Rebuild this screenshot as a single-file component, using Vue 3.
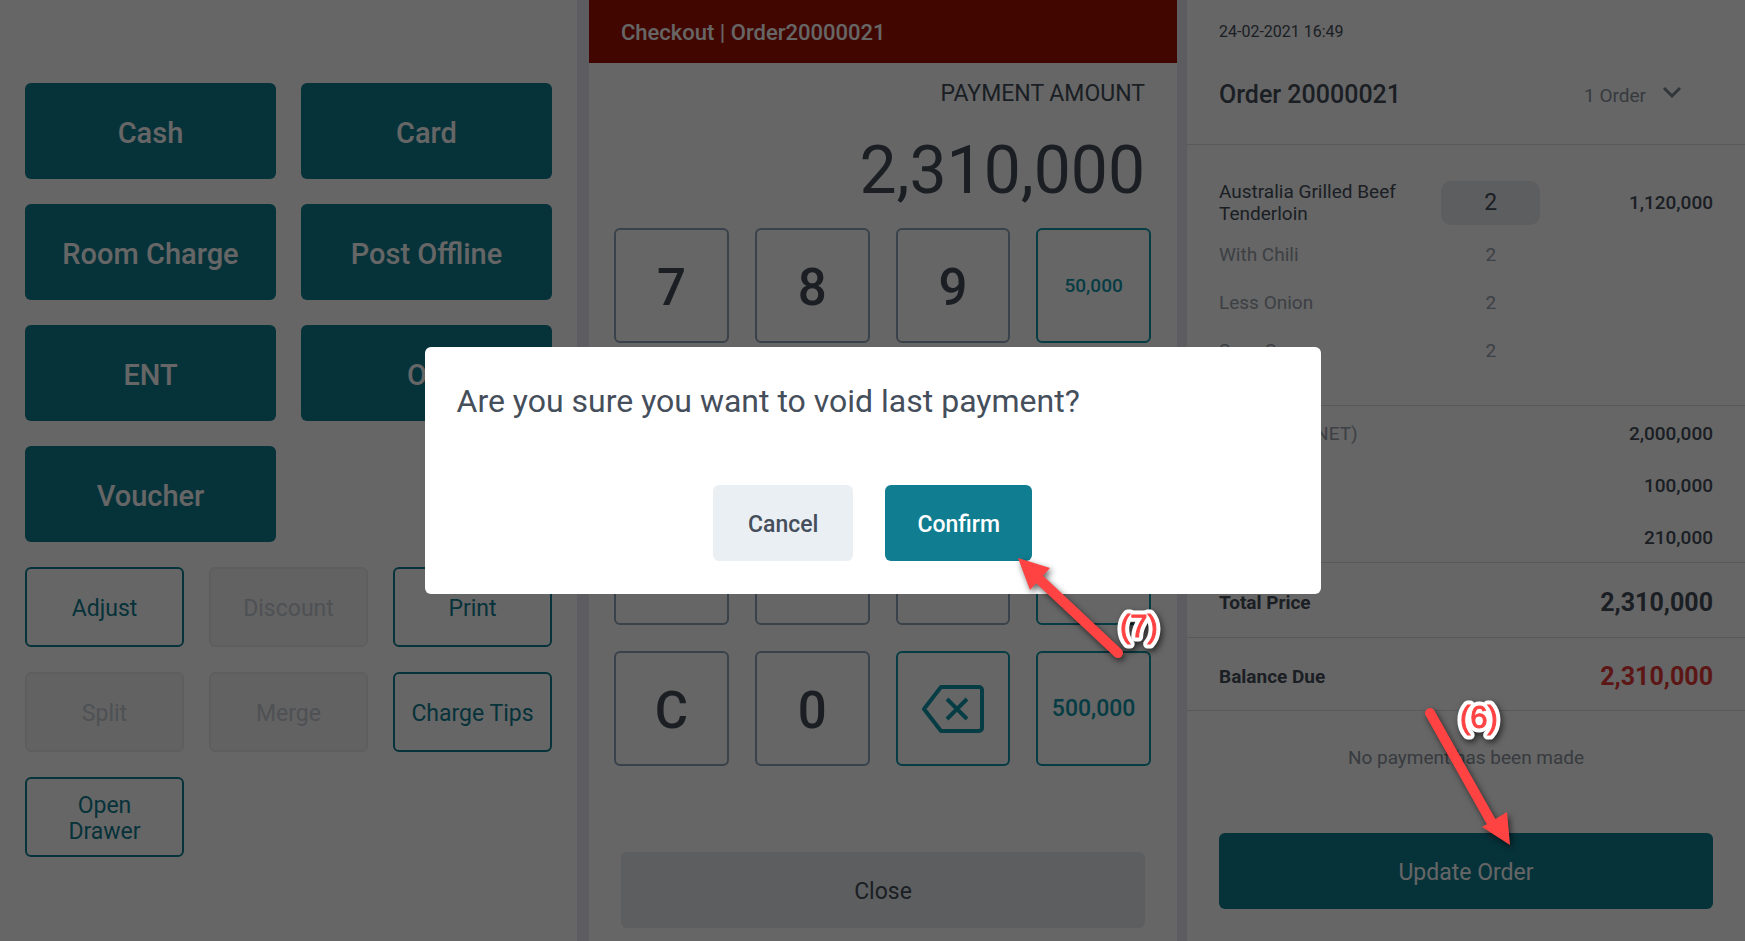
<script setup>
const payments = ['Cash', 'Card', 'Room Charge', 'Post Offline', 'ENT', 'OC', 'Voucher']

const actions = [
  { label: 'Adjust' },
  { label: 'Discount', disabled: true },
  { label: 'Print' },
  { label: 'Split', disabled: true },
  { label: 'Merge', disabled: true },
  { label: 'Charge Tips' },
  { label: 'Open Drawer' },
]

const keys = [
  { label: '7' }, { label: '8' }, { label: '9' }, { label: '50,000', kind: 'quick small' },
  { label: '4' }, { label: '5' }, { label: '6' }, { label: '100,000', kind: 'quick' },
  { label: '1' }, { label: '2' }, { label: '3' }, { label: '200,000', kind: 'quick' },
  { label: 'C' }, { label: '0' }, { label: 'Backspace', kind: 'quick', icon: true }, { label: '500,000', kind: 'quick' },
]

const modifiers = [
  { name: 'With Chili', qty: 2 },
  { name: 'Less Onion', qty: 2 },
  { name: 'Soya Sauce', qty: 2 },
]

const charges = [
  { name: 'Item Total (NET)', value: '2,000,000' },
  { name: 'Service', value: '100,000' },
  { name: 'Tax', value: '210,000' },
]
</script>

<template>
  <div class="app">
    <section class="methods" aria-label="Payment methods">
      <div class="pay-grid">
        <button v-for="p in payments" :key="p" type="button" class="pay">{{ p }}</button>
      </div>
      <div class="action-grid">
        <button v-for="a in actions" :key="a.label" type="button" class="action" :disabled="a.disabled">{{ a.label }}</button>
      </div>
    </section>

    <main class="checkout">
      <h1 class="bar">Checkout | Order20000021</h1>
      <div class="amount-label">PAYMENT AMOUNT</div>
      <div class="amount">2,310,000</div>
      <div class="keypad">
        <button v-for="k in keys" :key="k.label" type="button" class="key" :class="k.kind" :aria-label="k.label">
          <svg v-if="k.icon" class="backspace" width="64" height="50" viewBox="0 0 64 50" fill="none" stroke="currentColor" stroke-width="4" stroke-linejoin="round">
            <path d="M20 3h38a3 3 0 0 1 3 3v38a3 3 0 0 1-3 3H20L3 25z" />
            <path d="M26 15l20 20M46 15L26 35" />
          </svg>
          <template v-else>{{ k.label }}</template>
        </button>
      </div>
      <button type="button" class="close">Close</button>
    </main>

    <aside class="order">
      <header class="order-head">
        <div class="date">24-02-2021 16:49</div>
        <div class="order-row">
          <h2 class="order-title">Order 20000021</h2>
          <button type="button" class="picker">
            1 Order
            <svg class="chevron" width="20" height="14" viewBox="0 0 20 14" fill="none" stroke="currentColor" stroke-width="3">
              <path d="M2 2l8 8 8-8" />
            </svg>
          </button>
        </div>
      </header>

      <div class="items">
        <div class="item">
          <span class="item-name">Australia Grilled Beef Tenderloin</span>
          <span class="qty">2</span>
          <span class="price">1,120,000</span>
        </div>
        <div v-for="m in modifiers" :key="m.name" class="item modifier">
          <span>{{ m.name }}</span>
          <span class="mod-qty">{{ m.qty }}</span>
        </div>
      </div>

      <div class="charges">
        <div v-for="c in charges" :key="c.name" class="charge">
          <span class="muted">{{ c.name }}</span>
          <span class="price">{{ c.value }}</span>
        </div>
      </div>

      <div class="total">
        <span>Total Price</span>
        <span class="sum">2,310,000</span>
      </div>
      <div class="total due">
        <span>Balance Due</span>
        <span class="sum">2,310,000</span>
      </div>

      <p class="no-payment">No payment has been made</p>
      <button type="button" class="update">Update Order</button>
    </aside>

    <div class="overlay">
      <div class="dialog" role="dialog" aria-modal="true" aria-labelledby="dialog-title">
        <h2 id="dialog-title" class="dialog-title">Are you sure you want to void last payment?</h2>
        <div class="dialog-actions">
          <button type="button" class="btn cancel">Cancel</button>
          <button type="button" class="btn confirm">Confirm</button>
        </div>
      </div>
    </div>

    <svg class="note note-confirm" width="160" height="116" viewBox="0 0 160 116">
      <path class="shaft" d="M28 28L108 103" />
      <path class="head" d="M8 8L40 18L20 40z" />
      <text class="halo" x="129" y="87">(7)</text>
      <text class="num" x="129" y="87">(7)</text>
    </svg>
    <svg class="note note-update" width="110" height="160" viewBox="0 0 110 160">
      <path class="shaft" d="M15 18L78 130" />
      <path class="head" d="M95 150L67 132L92 117z" />
      <text class="halo" x="64" y="33">(6)</text>
      <text class="num" x="64" y="33">(6)</text>
    </svg>
  </div>
</template>

<style>
body {
  margin: 0;
  background: #fff;
}
</style>

<style scoped>
.app {
  position: relative;
  display: grid;
  grid-template-columns: 577fr 610fr 558fr;
  min-height: 100vh;
  background: #fff;
  color: #454e5b;
  font-family: Roboto, "Liberation Sans", sans-serif;
  overflow: hidden;
}

button {
  box-sizing: border-box;
  margin: 0;
  padding: 3px 0 0;
  font: inherit;
  color: inherit;
  background: none;
  border: 0;
  border-radius: 6px;
  cursor: pointer;
}

h1,
h2,
p {
  margin: 0;
}

.methods,
.checkout,
.order {
  min-width: 0;
}

.methods {
  padding: 83px 25px 25px;
}

.pay-grid {
  display: grid;
  grid-template-columns: 1fr 1fr;
  grid-auto-rows: 96px;
  gap: 25px;
  margin-bottom: 25px;
}

.pay {
  background: #117d91;
  color: #fff;
  font-size: 29px;
  font-weight: 500;
}

.action-grid {
  display: grid;
  grid-template-columns: repeat(3, 1fr);
  grid-auto-rows: 80px;
  gap: 25px;
}

.action {
  padding: 4px 16px 0;
  border: 2px solid #117d91;
  color: #117d91;
  font-size: 23px;
  line-height: 26px;
}

.action:disabled {
  border-color: #e9ebed;
  background: #f5f5f6;
  color: #c4cad2;
}

.checkout {
  display: flex;
  flex-direction: column;
  padding-bottom: 13px;
  border: solid #e6e7f2;
  border-width: 0 10px 0 12px;
}

.bar {
  padding: 3px 32px 0;
  background: #a30f00;
  color: #fff;
  font-size: 22px;
  font-weight: 500;
  line-height: 60px;
}

.amount-label {
  padding: 17px 32px 0;
  font-size: 23px;
  line-height: 28px;
  text-align: right;
}

.amount {
  padding: 21px 32px 0;
  font-size: 66px;
  line-height: 84px;
  text-align: right;
}

.keypad {
  display: grid;
  grid-template-columns: repeat(4, 1fr);
  grid-auto-rows: 115px;
  gap: 26px;
  padding: 15px 26px 0 25px;
}

.key {
  display: flex;
  align-items: center;
  justify-content: center;
  border: 2px solid #8ea3b8;
  font-size: 51px;
  font-weight: 500;
}

.quick {
  padding-top: 0;
  border-color: #1197a8;
  color: #1197a8;
  font-size: 23px;
}

.quick.small {
  font-size: 19px;
}

.close {
  height: 76px;
  margin: auto 32px 0;
  background: #e8eaee;
  font-size: 23px;
}

.order {
  display: flex;
  flex-direction: column;
  padding-bottom: 32px;
}

.order-head {
  padding: 20px 32px 33px;
  border-bottom: 1px solid #dcdfe4;
}

.date {
  font-size: 16px;
  line-height: 24px;
}

.order-row {
  display: flex;
  align-items: center;
  justify-content: space-between;
  margin-top: 35px;
}

.order-title {
  font-size: 25px;
  font-weight: 500;
  line-height: 32px;
}

.picker {
  display: flex;
  align-items: center;
  gap: 16px;
  margin-right: 31px;
  padding: 0;
  color: #8b939e;
  font-size: 19px;
}

.chevron {
  margin-bottom: 4px;
  color: #7a8794;
}

.items {
  padding: 36px 32px 30px;
}

.item {
  display: grid;
  grid-template-columns: 4fr 2fr 3fr;
  column-gap: 24px;
  align-items: center;
  font-size: 19px;
  line-height: 22px;
}

.qty {
  background: #e8eaee;
  border-radius: 10px;
  font-size: 23px;
  line-height: 44px;
  text-align: center;
}

.price {
  font-size: 19px;
  font-weight: 500;
  text-align: right;
}

.modifier {
  color: #98a0aa;
  line-height: 48px;
}

.modifier:nth-child(2) {
  margin-top: 6px;
}

.mod-qty {
  text-align: center;
}

.charges {
  border-top: 1px solid #dcdfe4;
}

.charge {
  display: flex;
  justify-content: space-between;
  padding: 4px 32px 0;
  font-size: 19px;
  line-height: 48px;
}

.muted {
  color: #98a0aa;
}

.total {
  display: flex;
  align-items: center;
  justify-content: space-between;
  padding: 5px 32px 0;
  border-top: 1px solid #dcdfe4;
  font-size: 19px;
  font-weight: 700;
  line-height: 69px;
}

.sum {
  font-size: 25px;
}

.due {
  border-bottom: 1px solid #dcdfe4;
  line-height: 67px;
}

.due .sum {
  color: #e53935;
}

.no-payment {
  padding: 32px 32px 0;
  color: #8b939e;
  font-size: 19px;
  line-height: 30px;
  text-align: center;
}

.update {
  height: 76px;
  margin: auto 32px 0;
  background: #117d91;
  color: #fff;
  font-size: 23px;
}

.overlay {
  position: absolute;
  inset: 0;
  display: flex;
  align-items: center;
  justify-content: center;
  background: rgba(0, 0, 0, 0.6);
}

.dialog {
  box-sizing: border-box;
  width: 896px;
  max-width: 90%;
  padding: 32px 32px 33px;
  background: #fff;
  border-radius: 6px;
}

.dialog-title {
  color: #454e5b;
  font-size: 32px;
  font-weight: 400;
  line-height: 44px;
}

.dialog-actions {
  display: flex;
  justify-content: center;
  gap: 32px;
  margin-top: 62px;
}

.btn {
  height: 76px;
  padding: 3px 32px 0;
  font-size: 23px;
  font-weight: 500;
}

.cancel {
  padding: 3px 35px 0;
  background: #eaeff4;
}

.confirm {
  background: #117d91;
  color: #fff;
}

.note {
  position: absolute;
  filter: drop-shadow(2px 3px 3px rgba(0, 0, 0, 0.6));
  pointer-events: none;
}

.note-confirm {
  left: 1010px;
  top: 550px;
}

.note-update {
  left: 1415px;
  top: 695px;
}

.shaft {
  stroke: #ff4343;
  stroke-width: 10px;
  stroke-linecap: round;
}

.head {
  fill: #ff4343;
}

.note text {
  font-family: "Liberation Sans", sans-serif;
  font-size: 31px;
  text-anchor: middle;
}

.num {
  fill: #ff4343;
  stroke: #ff4343;
  stroke-width: 1px;
}

.halo {
  fill: #fff;
  stroke: #fff;
  stroke-width: 9px;
  stroke-linejoin: round;
}
</style>
